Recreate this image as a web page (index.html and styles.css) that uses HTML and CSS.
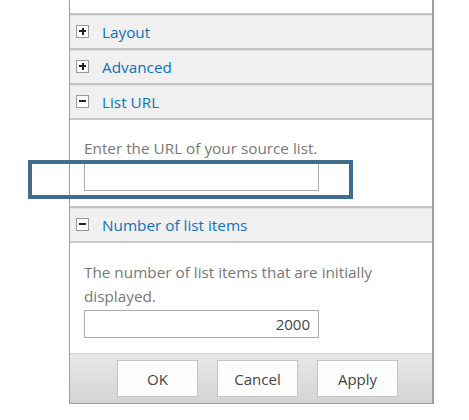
FILE: index.html
```html
<!DOCTYPE html>
<html>
<head>
<meta charset="utf-8">
<link rel="stylesheet" href="styles.css">
</head>
<body>
<div class="panel">
  <div class="top"></div>
  <div class="hdr"><span class="tog plus"></span><span class="ttl">Layout</span></div>
  <div class="hdr"><span class="tog plus"></span><span class="ttl">Advanced</span></div>
  <div class="hdr"><span class="tog"></span><span class="ttl">List URL</span></div>
  <div class="body url">
    <div class="desc">Enter the URL of your source list.</div>
    <div class="field"></div>
  </div>
  <div class="hdr"><span class="tog"></span><span class="ttl">Number of list items</span></div>
  <div class="body num">
    <div class="desc">The number of list items that are initially displayed.</div>
    <div class="field right">2000</div>
  </div>
  <div class="footer">
    <div class="btn">OK</div>
    <div class="btn">Cancel</div>
    <div class="btn">Apply</div>
  </div>
</div>
<div class="highlight"></div>
</body>
</html>
```
FILE: styles.css
```css
html, body { margin: 0; padding: 0; background: #fff; }
body { font-family: "Open Sans", "Noto Sans", sans-serif; position: relative; width: 469px; height: 420px; overflow: hidden; }
.panel { margin-left: 69px; width: 362px; border-left: 1px solid #9f9f9f; border-right: 2px solid #9f9f9f; border-bottom: 1px solid #9a9a9a; background: #fff; }
.top { height: 13px; }
.hdr { height: 33px; border-top: 2px solid #c3c3c3; background: #f0f0f0; display: flex; align-items: center; padding-left: 6px; box-shadow: inset 0 1px 0 #e2e2e2; }
.tog { box-sizing: border-box; width: 13px; height: 13px; border: 1px solid #999; background: #fff; margin-right: 13px; position: relative; }
.tog::before { content: ""; position: absolute; left: 2px; top: 4px; width: 7px; height: 2px; background: #222; }
.tog.plus::after { content: ""; position: absolute; left: 4.5px; top: 1.5px; width: 2px; height: 7px; background: #222; }
.ttl { color: #0f72bd; font-size: 15.3px; }
.body { border-top: 2px solid #c9c9c9; padding-left: 14px; box-sizing: border-box; }
.url { height: 88px; padding-top: 17px; }
.num { height: 112px; padding-top: 17px; }
.desc { color: #777; font-size: 15.3px; line-height: 23px; width: 330px; }
.num .desc { line-height: 24px; }
.field { box-sizing: border-box; width: 235px; height: 28px; border: 1px solid #ababab; background: #fff; color: #444; font-size: 15px; line-height: 26px; padding: 0 8px; }
.url .field { margin-top: 3px; }
.num .field { margin-top: 2px; }
.right { text-align: right; }
.footer { height: 50px; border-top: 1px solid #d2d2d2; background: linear-gradient(#e8e8e8, #d4d4d4); display: flex; gap: 19px; padding-left: 47px; padding-top: 6px; box-sizing: border-box; }
.btn { box-sizing: border-box; width: 81px; height: 37px; border: 1px solid #c4c4c4; background: #fdfdfd; color: #444; font-size: 15px; display: flex; align-items: center; justify-content: center; }
.highlight { position: absolute; left: 28px; top: 160px; width: 317px; height: 31px; border: 4px solid #3e6d8e; }
```
